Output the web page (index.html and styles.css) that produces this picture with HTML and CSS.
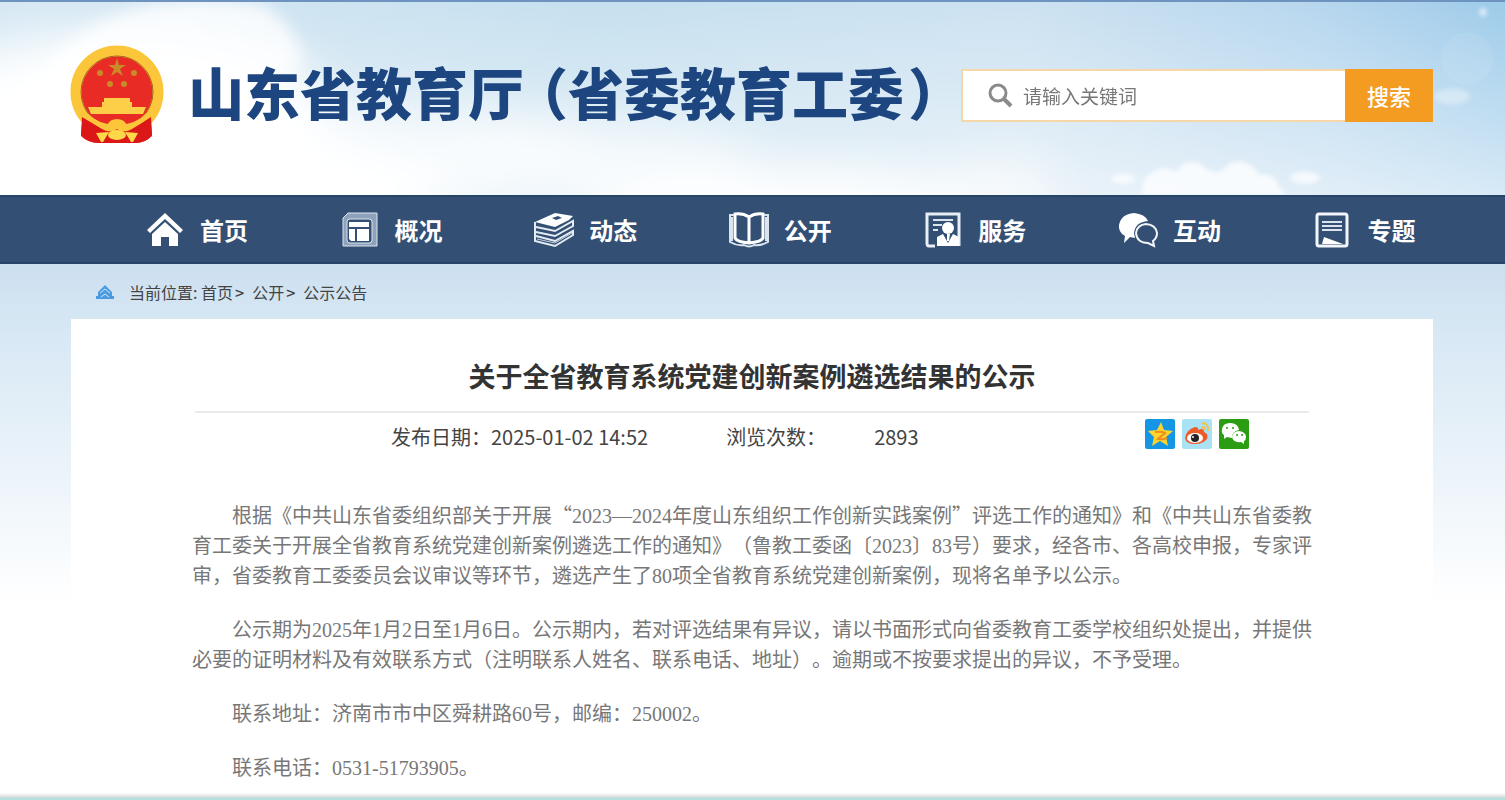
FILE: index.html
```html
<!DOCTYPE html>
<html lang="zh-CN">

<head>
  <meta charset="UTF-8">
  <meta name="viewport" content="width=device-width, initial-scale=1">
  <title>关于全省教育系统党建创新案例遴选结果的公示</title>
  <link rel="stylesheet" href="styles.css">
</head>

<body>

  <header class="header">
    <svg class="sky" viewBox="0 0 1505 192" preserveAspectRatio="none" aria-hidden="true">
      <defs>
        <linearGradient id="skyColor" x1="0" y1="0" x2="1" y2="0">
          <stop offset="0" stop-color="#d6e8f4"/>
          <stop offset=".4" stop-color="#c6e0ef"/>
          <stop offset=".68" stop-color="#cde2f1"/>
          <stop offset=".88" stop-color="#b6d6ee"/>
          <stop offset="1" stop-color="#9dcbea"/>
        </linearGradient>
        <linearGradient id="skyFade" x1="0" y1="0" x2="0" y2="1">
          <stop offset="0" stop-color="#fff" stop-opacity="0"/>
          <stop offset="1" stop-color="#fff" stop-opacity=".6"/>
        </linearGradient>
        <filter id="soft" x="-40%" y="-80%" width="180%" height="260%"><feGaussianBlur stdDeviation="24"/></filter>
        <filter id="edge" x="-20%" y="-20%" width="140%" height="140%"><feGaussianBlur stdDeviation="8"/></filter>
        <filter id="puff" x="-20%" y="-50%" width="140%" height="200%"><feGaussianBlur stdDeviation="2"/></filter>
      </defs>
      <rect width="1505" height="192" fill="url(#skyColor)"/>
      <rect width="1505" height="192" fill="url(#skyFade)"/>
      <g fill="#fff" filter="url(#soft)">
        <ellipse cx="130" cy="110" rx="200" ry="80"/>
        <ellipse cx="120" cy="190" rx="330" ry="70"/>
        <ellipse cx="380" cy="150" rx="220" ry="50" opacity=".6"/>
        <ellipse cx="590" cy="155" rx="160" ry="36" opacity=".6"/>
        <ellipse cx="780" cy="200" rx="200" ry="32"/>
        <ellipse cx="1000" cy="190" rx="60" ry="34" opacity=".6"/>
      </g>
      <path d="M120 12 Q180 -10 262 2 Q290 20 302 50 Q300 74 270 90 L150 130 L30 90 Q50 40 120 12 Z" fill="#fff" opacity=".8" filter="url(#edge)"/>
      <g fill="#fff" filter="url(#puff)">
        <path d="M1142 192 Q1140 174 1156 168 Q1165 162 1176 169 Q1187 153 1202 162 Q1212 173 1223 167 Q1229 157 1243 159 Q1254 162 1260 172 Q1276 170 1278 182 L1286 192 Z" opacity=".75"/>
        <ellipse cx="1123" cy="176" rx="12" ry="5" opacity=".7"/>
        <ellipse cx="1305" cy="175" rx="15" ry="6" opacity=".7"/>
        <ellipse cx="1452" cy="94" rx="18" ry="8" opacity=".35"/>
        <circle cx="1483" cy="10" r="4" opacity=".6"/>
      </g>
      <circle cx="1467" cy="56" r="26" fill="#fff" opacity=".08"/>
    </svg>

    <div class="header-inner">
      <svg class="emblem" viewBox="0 0 94 100" role="img" aria-label="国徽">
        <path d="M13 66 L11 90 Q18 98 29 98 L65 98 Q76 98 82 90 L80 66 Z" fill="#dc1f1f"/>
        <circle cx="47" cy="47" r="41" fill="#e92b25" stroke="#fcc63b" stroke-width="11"/>
        <circle cx="47" cy="47" r="36" fill="none" stroke="#a8641e" stroke-width="1"/>
        <path d="M12 72 Q22 78 32 84 Q41 89 47 84 Q53 89 62 84 Q72 78 81 72 L82 91 Q75 98 65 98 L29 98 Q18 98 11 91 Z" fill="#dc1717"/>
        <g fill="#c98a28">
          <polygon points="47,13 49,20 56,20 50,24 53,31 47,27 41,31 44,24 38,20 45,20"/>
          <circle cx="30" cy="28" r="3"/><circle cx="64" cy="28" r="3"/>
          <circle cx="40" cy="39" r="3"/><circle cx="54" cy="39" r="3"/>
        </g>
        <path d="M34 53 H60 V57 H62 V62 H76 L73 69 H21 L18 62 H32 V57 H34 Z" fill="#fdcf48"/>
        <path d="M16 70 Q28 82 47 82 Q66 82 78 70" fill="none" stroke="#fcc63b" stroke-width="4"/>
        <path d="M37 80 Q40 74 47 74 Q54 74 57 80 L53 84 Q47 79 41 84 Z" fill="#fcc63b"/>
        <ellipse cx="47" cy="90" rx="9" ry="5" fill="#ffd84a"/>
        <path d="M26 88 L39 87 L33 97 L31 97 Z M68 88 L55 87 L61 97 L63 97 Z" fill="#ffd84a"/>
      </svg>
      <div class="site-name">山东省教育厅<span class="paren paren-open">（</span>省委教育工委<span class="paren paren-close">）</span></div>

      <form class="search">
        <label class="search-icon" for="keyword">
          <svg viewBox="0 0 26 26" width="26" height="26" role="img" aria-label="关键词">
            <circle cx="11" cy="11" r="8" fill="none" stroke="#8a8a8a" stroke-width="3"/>
            <path d="M17 17 L24 24" stroke="#8a8a8a" stroke-width="4"/>
          </svg>
        </label>
        <input type="text" id="keyword" placeholder="请输入关键词">
        <button type="submit">搜索</button>
      </form>
    </div>
  </header>

  <nav class="navbar">
    <ul>
      <li><a href="#">
        <svg viewBox="0 0 36 36"><path d="M18 1 L36 18 L33 21 L18 7 L3 21 L0 18 Z M18 10 L31 22 V34 H22 V25 H14 V34 H5 V22 Z" fill="#fff"/></svg>
        首页</a></li>
      <li><a href="#">
        <svg viewBox="0 0 36 36">
          <path d="M1 6 L6 1 H35 V34 H1 Z" fill="#8fa2bc" stroke="#dbe3ed" stroke-width="1"/>
          <rect x="5" y="7" width="25" height="24" rx="3" fill="#335074" stroke="#dbe3ed" stroke-width="1"/>
          <path d="M7 10 H27 V15 H7 Z M7 17 H13 V29 H9 L7 27 Z M15 17 H27 V29 H15 Z" fill="#fff"/>
        </svg>
        概况</a></li>
      <li><a href="#">
        <svg class="wide" viewBox="0 0 40 36">
          <path d="M1 10 L21 1 L39 4 L35 8 L21 15 Z" fill="#fff"/>
          <path d="M18 6 L24 4 L28 6 L22 8 Z" fill="#335074"/>
          <path d="M1 10 V29 L21 34 L39 23 V19 L21 29 L2 24 M2 15 L21 19 L39 9 V14 L21 24 L2 20" fill="none" stroke="#e4ebf3" stroke-width="2"/>
          <path d="M3 27 L21 31 L38 21" fill="none" stroke="#c5d0de" stroke-width="1"/>
        </svg>
        动态</a></li>
      <li><a href="#">
        <svg class="wide" viewBox="0 0 40 36">
          <path d="M20 5 Q14 1 6 2 V26 Q8 30 20 31 Q32 30 34 26 V2 Q26 1 20 5 V30" fill="none" stroke="#fff" stroke-width="3"/>
          <path d="M5 3 H1 V30 Q8 34 15 33 Q20 36 25 33 Q32 34 39 30 V3 H35 M3 5 V29 M37 5 V29" fill="none" stroke="#dbe3ed" stroke-width="2"/>
        </svg>
        公开</a></li>
      <li><a href="#">
        <svg viewBox="0 0 36 36">
          <path d="M10 34 H4 Q2 34 2 31 V2 H34 V34" fill="none" stroke="#e8eef5" stroke-width="3"/>
          <path d="M8 8 H28 M8 13 H17 M8 18 H13" stroke="#dbe3ed" stroke-width="2"/>
          <circle cx="23" cy="16" r="6" fill="#fff"/>
          <path d="M12 34 V25 L18 22 L23 31 L28 22 L34 25 V34 Z M22 22 H25 L24 29 H22 Z" fill="#fff"/>
        </svg>
        服务</a></li>
      <li><a href="#">
        <svg class="wide" viewBox="0 0 40 36">
          <path d="M16 1 Q27 2 30 9 Q17 10 16 21 L17 26 L12 25 L6 31 L7 24 Q0 20 1 13 Q3 2 16 1 Z" fill="#fff"/>
          <path d="M28 12 Q38 13 39 21 Q39 26 35 29 L36 34 L30 31 Q19 31 18 21 Q19 13 28 12 Z" fill="none" stroke="#f2f5f9" stroke-width="2"/>
        </svg>
        互动</a></li>
      <li><a href="#">
        <svg viewBox="0 0 36 36">
          <rect x="3" y="2" width="30" height="32" rx="2" fill="none" stroke="#f2f5f9" stroke-width="3"/>
          <path d="M8 10 H28 M8 14 H28 M8 18 H28" stroke="#dbe3ed" stroke-width="2"/>
          <path d="M8 32 L10 25 L29 32 Z" fill="#fff"/>
        </svg>
        专题</a></li>
    </ul>
  </nav>

  <main class="main">
    <div class="breadcrumb">
      <svg viewBox="0 0 18 14" width="18" height="14" aria-hidden="true">
        <path d="M9 0 L16 7 V11 H18 V14 H0 V11 H2 V7 Z" fill="#4b9be0"/>
        <path d="M4 8 L9 4 L14 8 M5 12 L9 9 L13 12" fill="none" stroke="#d3e5f4" stroke-width="1"/>
      </svg>
      <span>当前位置: <a href="#">首页</a><span class="sep">&gt;</span><a href="#">公开</a><span class="sep">&gt;</span><a href="#">公示公告</a></span>
    </div>

    <article class="card">
      <h1>关于全省教育系统党建创新案例遴选结果的公示</h1>
      <div class="meta">
        <span class="date">发布日期：2025-01-02 14:52</span>
        <span class="views">浏览次数：</span>
        <span>2893</span>
        <div class="share">
          <a href="#" title="QQ空间">
            <svg viewBox="0 0 30 30">
              <rect width="30" height="30" rx="2" fill="#1596e4"/>
              <polygon points="16,3 19,11 28,12 21,18 23,27 15,22 7,27 9,18 3,12 12,11" fill="#fdd32c"/>
              <path d="M10 13 Q17 12 20 14 L13 20 Q18 21 22 19" fill="none" stroke="#ef8d1c" stroke-width="2"/>
            </svg>
          </a>
          <a href="#" title="新浪微博">
            <svg viewBox="0 0 30 30">
              <rect width="30" height="30" rx="2" fill="#a9e1f5"/>
              <path d="M3 19 Q4 11 13 8 Q17 8 16 11 Q22 8 22 13 Q27 15 25 20 Q21 25 13 25 Q4 25 3 19 Z" fill="#ee5a25"/>
              <ellipse cx="13" cy="19" rx="8" ry="5" fill="#fff"/>
              <circle cx="13" cy="19" r="4" fill="#222"/>
              <circle cx="11" cy="18" r="1" fill="#fff"/>
              <path d="M20 4 Q27 4 26 12 M20 8 Q23 8 23 11" fill="none" stroke="#f5c146" stroke-width="2"/>
            </svg>
          </a>
          <a href="#" title="微信">
            <svg viewBox="0 0 30 30">
              <rect width="30" height="30" rx="2" fill="#2b9d12"/>
              <path d="M11 4 Q19 4 20 11 Q13 12 13 19 L8 18 L5 20 L5 16 Q2 14 3 10 Q4 4 11 4 Z" fill="#fff"/>
              <path d="M20 12 Q27 13 27 18 Q27 21 25 22 L25 25 L22 23 Q14 24 13 18 Q14 12 20 12 Z" fill="#fff"/>
              <g fill="#2b9d12"><circle cx="8" cy="9" r="1"/><circle cx="14" cy="9" r="1"/><circle cx="18" cy="16" r="1"/><circle cx="23" cy="16" r="1"/></g>
            </svg>
          </a>
        </div>
      </div>

      <div class="content">
        <p>根据《中共山东省委组织部关于开展<span class="quote">“</span>2023—2024年度山东组织工作创新实践案例<span class="quote">”</span>评选工作的通知》和《中共山东省委教育工委关于开展全省教育系统党建创新案例遴选工作的通知》（鲁教工委函〔2023〕83号）要求，经各市、各高校申报，专家评审，省委教育工委委员会议审议等环节，遴选产生了80项全省教育系统党建创新案例，现将名单予以公示。</p>
        <p>公示期为2025年1月2日至1月6日。公示期内，若对评选结果有异议，请以书面形式向省委教育工委学校组织处提出，并提供必要的证明材料及有效联系方式（注明联系人姓名、联系电话、地址）。逾期或不按要求提出的异议，不予受理。</p>
        <p>联系地址：济南市市中区舜耕路60号，邮编：250002。</p>
        <p>联系电话：0531-51793905。</p>
      </div>
    </article>
  </main>

  <footer class="footer"></footer>

</body>

</html>
```

FILE: styles.css
```css
* {
  box-sizing: border-box;
}

body {
  margin: 0;
  font-family: "Noto Sans CJK SC", sans-serif;
  color: #444;
  background-color: #fff;
}

a {
  color: inherit;
  text-decoration: none;
}

/* Header */
.header {
  position: relative;
  height: 195px;
  border-top: 2px solid #6f93bf;
}

.sky {
  position: absolute;
  top: 0;
  left: 0;
  width: 100%;
  height: 100%;
}

.header-inner {
  position: relative;
  display: flex;
  align-items: center;
  margin: 0 72px 0 70px;
  padding-top: 43px;
}

.emblem {
  width: 94px;
  height: 100px;
  flex: none;
}

.site-name {
  align-self: flex-start;
  margin-left: 24px;
  font-size: 56px;
  line-height: 92px;
  font-weight: 900;
  color: #1d4680;
  white-space: nowrap;
}

.paren {
  font-feature-settings: "halt";
}

.paren-open {
  margin-left: 16px;
}

.paren-close {
  margin-left: 4px;
}

.search {
  display: flex;
  align-items: center;
  width: 472px;
  height: 53px;
  margin-left: auto;
  background-color: #fff;
  border: 2px solid #f6d7a8;
}

.search-icon {
  display: flex;
  padding: 0 10px 0 24px;
}

.search input {
  flex: 1;
  min-width: 0;
  height: 100%;
  padding: 0;
  border: none;
  outline: none;
  background: none;
  font-family: inherit;
  font-size: 19px;
  color: #333;
}

.search input::placeholder {
  color: #777;
}

.search button {
  width: 88px;
  height: 53px;
  margin-right: -2px;
  padding: 0;
  border: none;
  background-color: #f39c21;
  color: #fff;
  font-family: inherit;
  font-size: 22px;
  font-weight: 500;
  cursor: pointer;
}

/* Navbar */
.navbar {
  background-color: #335074;
  border-top: 2px solid #274568;
  border-bottom: 2px solid #274568;
}

.navbar ul {
  display: flex;
  margin: 0 72px 0 71px;
  padding: 0;
  list-style: none;
}

.navbar li {
  flex: 1;
}

.navbar a {
  display: flex;
  align-items: center;
  gap: 17px;
  height: 65px;
  padding-left: 76px;
  color: #fff;
  font-size: 24px;
  font-weight: bold;
  white-space: nowrap;
}

.navbar svg {
  width: 36px;
  height: 36px;
  flex: none;
}

.navbar svg.wide {
  width: 40px;
  margin: 0 -2px;
}

/* Main */
.main {
  padding: 0 72px 0 71px;
  background: linear-gradient(#cde0f0, #d9e9f5 80px, #fff 340px);
}

.breadcrumb {
  display: flex;
  align-items: center;
  gap: 15px;
  height: 55px;
  padding-left: 25px;
  font-size: 16px;
}

.sep {
  margin: 0 8px 0 2px;
  font-weight: 500;
}

.card {
  padding: 37px 24px 0;
  background-color: #fff;
}

.card h1 {
  max-width: 1114px;
  margin: 0 auto;
  padding-bottom: 15px;
  border-bottom: 2px solid #e9e9e9;
  text-align: center;
  font-size: 27px;
  line-height: 40px;
  color: #333;
}

.meta {
  display: flex;
  align-items: center;
  max-width: 1114px;
  height: 46px;
  margin: 0 auto;
  padding: 0 60px 0 196px;
  font-size: 20px;
}

.meta .date {
  margin-right: 78px;
}

.meta .views {
  margin-right: 48px;
}

.share {
  display: flex;
  gap: 7px;
  margin-left: auto;
  margin-bottom: 4px;
}

.share svg {
  display: block;
  width: 30px;
  height: 30px;
}

/* 正文 */
.content {
  max-width: 1120px;
  margin: 0 auto;
  padding: 41px 0 10px;
  font-family: "Liberation Serif", "Noto Sans CJK SC", serif;
  font-size: 20px;
  line-height: 30px;
  color: #777;
  text-align: justify;
  text-spacing-trim: space-all;
}

.content p {
  margin: 0 0 24px;
  text-indent: 2em;
}

.content p:last-child {
  margin-bottom: 0;
}

.quote {
  font-family: "Noto Sans CJK SC", sans-serif;
}

.footer {
  height: 8px;
  background: linear-gradient(#fff, #dcdcdc 4px, #b5dedd 5px);
}
```
